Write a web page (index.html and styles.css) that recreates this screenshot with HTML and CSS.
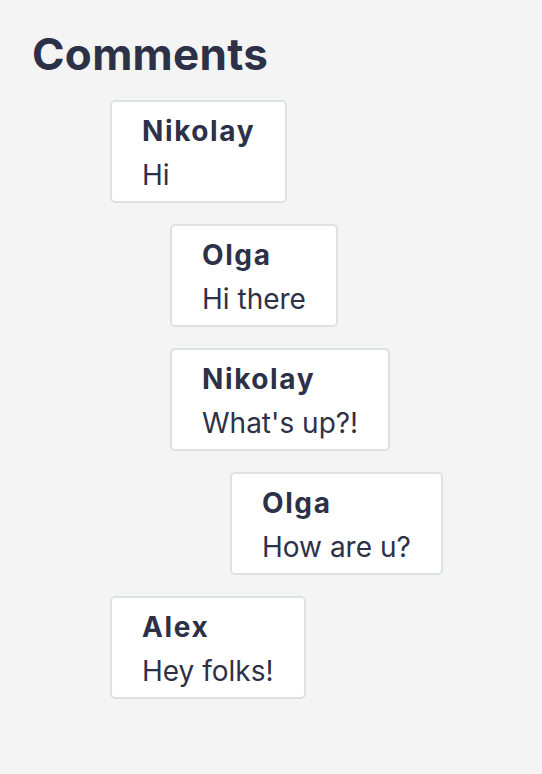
FILE: index.html
```html
<!DOCTYPE html>
<html>
<head>
<meta charset="utf-8">
<link rel="stylesheet" href="styles.css">
</head>
<body>
<div class="page">
  <h1 class="title">Comments</h1>
  <div class="thread">
    <div class="comment">
      <div class="card"><div class="name">Nikolay</div><div class="text">Hi</div></div>
      <div class="replies">
        <div class="comment">
          <div class="card"><div class="name">Olga</div><div class="text">Hi there</div></div>
        </div>
        <div class="comment">
          <div class="card"><div class="name">Nikolay</div><div class="text">What's up?!</div></div>
          <div class="replies">
            <div class="comment">
              <div class="card"><div class="name">Olga</div><div class="text">How are u?</div></div>
            </div>
          </div>
        </div>
      </div>
    </div>
    <div class="comment">
      <div class="card"><div class="name">Alex</div><div class="text">Hey folks!</div></div>
    </div>
  </div>
</div>
</body>
</html>
```
FILE: styles.css
```css
html, body {
  margin: 0;
  padding: 0;
  background: #f4f4f4;
}
body {
  font-family: Inter, "Noto Sans", sans-serif;
  color: #2d3148;
}
.page {
  padding: 26px 32px;
}
.title {
  margin: 0;
  font-size: 44px;
  font-weight: 700;
  line-height: 56px;
  letter-spacing: 0.3px;
}
.thread {
  margin-top: 18px;
  margin-left: 78px;
  display: flex;
  flex-direction: column;
  gap: 21px;
}
.comment {
  display: flex;
  flex-direction: column;
  align-items: flex-start;
  gap: 21px;
}
.replies {
  margin-left: 60px;
  display: flex;
  flex-direction: column;
  gap: 21px;
}
.card {
  background: #ffffff;
  border: 2px solid #dde0e4;
  border-radius: 5px;
  padding: 7px 30px 4px;
  font-size: 28px;
  line-height: 44px;
}
.name {
  font-weight: 700;
  letter-spacing: 1.6px;
}
.text {
  font-weight: 400;
}
```
